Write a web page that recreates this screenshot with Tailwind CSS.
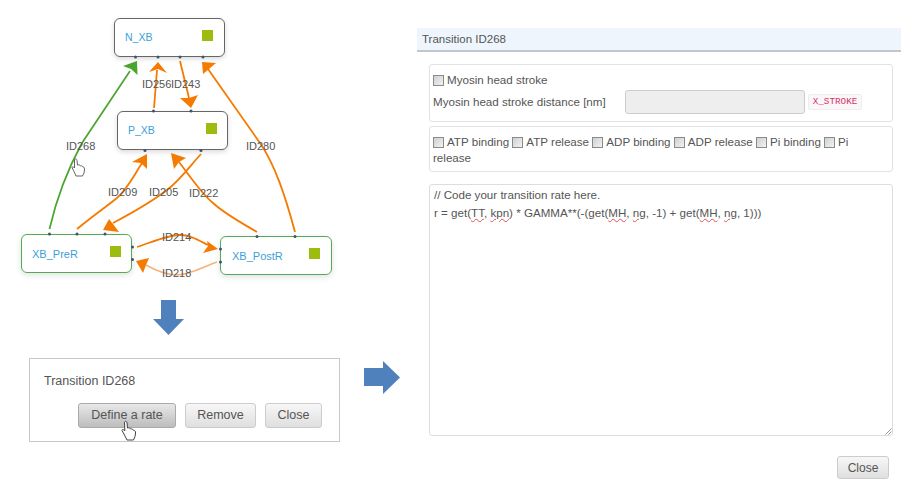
<!DOCTYPE html>
<html lang="en">
<head>
  <meta charset="UTF-8" />
  <title>Transition ID268</title>
  <script src="https://cdn.jsdelivr.net/npm/@tailwindcss/browser@4"></script>
</head>
<body class="bg-white font-['Liberation_Sans',sans-serif] text-[11.6px] text-[#555] overflow-hidden">
  <div class="flex w-[908px] h-[488px]">

    <!-- left column: diagram, arrow, popup -->
    <div class="w-[417px] shrink-0">
      <div class="relative h-[300px]">
        <!-- nodes -->
        <div class="absolute left-[114px] top-[18px] w-[111px] h-[39px] flex items-center justify-between pl-[10px] pr-[11px] bg-white border-[1.5px] border-[#666] rounded-[6px] shadow-[0_2px_5px_rgba(0,0,0,0.15)]">
          <span class="text-[#3a9fd8] text-[10.5px] mt-[1px]">N_XB</span>
          <span class="w-[11px] h-[11px] bg-[#9cbd10] mb-[5px]"></span>
        </div>
        <div class="absolute left-[117px] top-[111px] w-[111px] h-[39px] flex items-center justify-between pl-[10px] pr-[10px] bg-white border-[1.5px] border-[#666] rounded-[6px] shadow-[0_2px_5px_rgba(0,0,0,0.15)]">
          <span class="text-[#3a9fd8] text-[10.5px] mt-[1px]">P_XB</span>
          <span class="w-[11px] h-[11px] bg-[#9cbd10] mb-[5px]"></span>
        </div>
        <div class="absolute left-[21px] top-[234px] w-[111px] h-[39px] flex items-center justify-between pl-[10px] pr-[10px] bg-white border-[1.5px] border-[#55aa55] rounded-[6px] shadow-[0_2px_6px_rgba(0,0,0,0.12)]">
          <span class="text-[#3a9fd8] text-[11px] mt-[1px]">XB_PreR</span>
          <span class="w-[11px] h-[11px] bg-[#9cbd10] mb-[5px]"></span>
        </div>
        <div class="absolute left-[220px] top-[236px] w-[112px] h-[39px] flex items-center justify-between pl-[11px] pr-[11px] bg-white border-[1.5px] border-[#55aa55] rounded-[6px] shadow-[0_2px_6px_rgba(0,0,0,0.12)]">
          <span class="text-[#3a9fd8] text-[11px] mt-[1px]">XB_PostR</span>
          <span class="w-[11px] h-[11px] bg-[#9cbd10] mb-[5px]"></span>
        </div>

        <!-- edges -->
        <svg class="absolute left-0 top-0" width="417" height="300" fill="none">
          <g stroke="#4aa52e" stroke-width="1.7">
            <path d="M49.5 229C58 192 70 165 82 143L130 71" />
          </g>
          <polygon points="137,61 137.5,75 131,69 123,66" fill="#4aa52e" />
          <g stroke="#f57a00" stroke-width="1.8">
            <path d="M154 108L157 70" />
            <path d="M180 61L189 98" />
            <path d="M295 232C285 195 275 165 260 143L208 69" />
            <path d="M77 229C95 214 106 207 117 198C128 188 133 177 142 163" />
            <path d="M201 154C190 166 180 180 167 190C150 203 130 214 113 223" />
            <path d="M257 232C240 222 225 214 213 203C202 194 195 183 179 162" />
            <path d="M137 247C155 241 168 235 180 235C190 235 198 240 208 245" />
          </g>
          <path d="M217 262C205 266 190 275 177 275C165 275 155 270 146 265" stroke="#f7b27a" stroke-width="1.7" />
          <g fill="#f57a00">
            <polygon points="158,62 167,73 158,69 149,72" />
            <polygon points="191,108 180,98 189,98 198,95" />
            <polygon points="202,62 216,63 209,69 203,74" />
            <polygon points="147,154 147,169 141,163 132,162" />
            <polygon points="103,230 109,219 113,224 119,232" />
            <polygon points="171,153 186,158 179,162 174,169" />
            <polygon points="218,249 207,241 208,246 203,253" />
            <polygon points="136,261 149,258 146,265 143,273" />
          </g>
          <!-- ports -->
          <g fill="#3f5468">
            <circle cx="135.5" cy="57" r="1.5" /><circle cx="158" cy="57" r="1.5" /><circle cx="180" cy="57" r="1.5" /><circle cx="203" cy="57" r="1.5" />
            <circle cx="153.5" cy="111" r="1.5" /><circle cx="191" cy="111" r="1.5" /><circle cx="145" cy="150.5" r="1.5" /><circle cx="201" cy="150.5" r="1.5" />
            <circle cx="49.5" cy="234" r="1.5" /><circle cx="77" cy="234" r="1.5" /><circle cx="105" cy="234" r="1.5" /><circle cx="132.5" cy="247" r="1.5" /><circle cx="132.5" cy="259.5" r="1.5" />
            <circle cx="257" cy="236.5" r="1.5" /><circle cx="295" cy="236.5" r="1.5" /><circle cx="220.5" cy="249" r="1.5" /><circle cx="220.5" cy="262" r="1.5" />
          </g>
          <!-- hand cursor -->
          <path d="M74.5 159.5C75.5 158.5 77 159 77 160.5L77.5 165C79 164.5 80 165 80.5 166C81.5 165.5 82.5 166 83 167C84.5 167 84.5 168.5 84.5 170L84 173L82.5 176L76 176L74 171.5L72 167.5C72 166.5 73.5 166.5 74.5 168Z" fill="#fff" stroke="#555" stroke-width="0.9" />
        </svg>

        <!-- edge labels -->
        <span class="absolute left-[66px] top-[140px] text-[11px] leading-[13px]">ID268</span>
        <span class="absolute left-[142px] top-[78px] text-[11px] leading-[13px]">ID256</span>
        <span class="absolute left-[171px] top-[78px] text-[11px] leading-[13px]">ID243</span>
        <span class="absolute left-[246px] top-[140px] text-[11px] leading-[13px]">ID280</span>
        <span class="absolute left-[108px] top-[186px] text-[11px] leading-[13px]">ID209</span>
        <span class="absolute left-[149px] top-[186px] text-[11px] leading-[13px]">ID205</span>
        <span class="absolute left-[189px] top-[187px] text-[11px] leading-[13px]">ID222</span>
        <span class="absolute left-[162px] top-[231px] text-[11px] leading-[13px]">ID214</span>
        <span class="absolute left-[162px] top-[267px] text-[11px] leading-[13px]">ID218</span>
      </div>

      <svg class="ml-[153px]" width="32" height="36" viewBox="0 0 32 36"><polygon points="8,0 23,0 23,19 31,19 15.5,35 0,19 8,19" fill="#4f81bd" /></svg>

      <div class="relative">
        <div class="ml-[29px] mt-[22px] w-[311px] h-[84px] border-[1.5px] border-[#c8c8c8] bg-white pt-[15px] pl-[14px]">
          <p class="text-[12.5px] leading-[14px]">Transition ID268</p>
          <div class="flex gap-[9px] mt-[15px] ml-[34px]">
            <button class="w-[98px] h-[25px] text-[12.5px] text-[#555] rounded-[3px] border border-[#aaa] bg-gradient-to-b from-[#e8e8e8] to-[#bdbdbd]">Define a rate</button>
            <button class="w-[71px] h-[25px] text-[12.5px] text-[#555] rounded-[3px] border border-[#ccc] bg-gradient-to-b from-[#f7f7f7] to-[#dfdfdf]">Remove</button>
            <button class="w-[57px] h-[25px] text-[12.5px] text-[#555] rounded-[3px] border border-[#ccc] bg-gradient-to-b from-[#f7f7f7] to-[#dfdfdf]">Close</button>
          </div>
        </div>
        <svg class="absolute left-[120px] top-[62px]" width="18" height="22" viewBox="0 0 18 22" fill="none"><path d="M4.5 2C5.5 0.8 7 1.2 7 2.7L7.5 8C9 7.5 10.2 8 10.6 9C11.8 8.6 12.8 9.2 13.2 10.2C15 10 15.6 11.5 15.6 13L15 16.5L13.5 20L7 20L4.5 15L2 10.5C2 9 3.6 9 4.8 11Z" fill="#fff" stroke="#444" stroke-width="1" /></svg>
      </div>
    </div>

    <!-- right column: rate dialog -->
    <div class="relative w-[484px] pt-[28px]">
      <svg class="absolute left-[-53px] top-[361px]" width="37" height="33" viewBox="0 0 37 33"><polygon points="0,7 19,7 19,0 36,16.5 19,33 19,25 0,25" fill="#4f81bd" /></svg>

      <div class="h-[24px] pl-[5px] bg-[#eef5fd] border-b-[2px] border-[#c3c7cb] text-[11.5px] leading-[22px]">Transition ID268</div>

      <div class="ml-[12px] mr-[8px] mt-[12px]">
        <div class="h-[58px] border border-[#e2e2e2] rounded-[3px] pl-[3px] pt-[7px]">
          <label class="flex items-center gap-[3px] h-[16px]">
            <input type="checkbox" class="appearance-none w-[11px] h-[11px] border border-[#8a8a8a] bg-gradient-to-br from-[#d0d0d0] to-[#f2f2f2]" />
            <span>Myosin head stroke</span>
          </label>
          <div class="flex items-center mt-[2px]">
            <span class="w-[192px]">Myosin head stroke distance [nm]</span>
            <div class="w-[180px] h-[24px] bg-[#eee] border border-[#ccc] rounded-[3px]"></div>
            <code class="ml-[3px] w-[54px] h-[16px] flex items-center justify-center bg-[#fbf6f7] border border-[#eee] rounded-[2px] font-['Liberation_Mono',monospace] text-[9.3px] text-[#d6336c]">X_STROKE</code>
          </div>
        </div>

        <div class="mt-[4px] h-[46px] border border-[#e2e2e2] rounded-[3px] pl-[3px] pr-[8px] pt-[7px] leading-[16px]">
          <label><input type="checkbox" class="appearance-none align-[-2px] mr-[3px] w-[11px] h-[11px] border border-[#8a8a8a] bg-gradient-to-br from-[#d0d0d0] to-[#f2f2f2]" />ATP binding</label>
          <label><input type="checkbox" class="appearance-none align-[-2px] mr-[3px] w-[11px] h-[11px] border border-[#8a8a8a] bg-gradient-to-br from-[#d0d0d0] to-[#f2f2f2]" />ATP release</label>
          <label><input type="checkbox" class="appearance-none align-[-2px] mr-[3px] w-[11px] h-[11px] border border-[#8a8a8a] bg-gradient-to-br from-[#d0d0d0] to-[#f2f2f2]" />ADP binding</label>
          <label><input type="checkbox" class="appearance-none align-[-2px] mr-[3px] w-[11px] h-[11px] border border-[#8a8a8a] bg-gradient-to-br from-[#d0d0d0] to-[#f2f2f2]" />ADP release</label>
          <label><input type="checkbox" class="appearance-none align-[-2px] mr-[3px] w-[11px] h-[11px] border border-[#8a8a8a] bg-gradient-to-br from-[#d0d0d0] to-[#f2f2f2]" />Pi binding</label>
          <label><input type="checkbox" class="appearance-none align-[-2px] mr-[3px] w-[11px] h-[11px] border border-[#8a8a8a] bg-gradient-to-br from-[#d0d0d0] to-[#f2f2f2]" />Pi</label>
          <span>release</span>
        </div>

        <div class="relative mt-[12px] h-[252px] border-[1.5px] border-[#ddd] rounded-[3px] pl-[4px] pt-[1px] leading-[17.5px]">
          <p>// Code your transition rate here.</p>
          <p>r = get(<span class="underline decoration-wavy decoration-[#e05050] decoration-1">TT</span>, <span class="underline decoration-wavy decoration-[#e05050] decoration-1">kpn</span>) * GAMMA**(-(get(<span class="underline decoration-wavy decoration-[#e05050] decoration-1">MH</span>, <span class="underline decoration-wavy decoration-[#e05050] decoration-1">ng</span>, -1) + get(<span class="underline decoration-wavy decoration-[#e05050] decoration-1">MH</span>, <span class="underline decoration-wavy decoration-[#e05050] decoration-1">ng</span>, 1)))</p>
          <svg class="absolute right-0 bottom-0" width="7" height="7" stroke="#999" stroke-width="1"><path d="M0.5 6.5L6.5 0.5M3.5 6.5L6.5 3.5" /></svg>
        </div>
      </div>

      <div class="flex justify-end mt-[20px] mr-[12px]">
        <button class="w-[52px] h-[23px] text-[12px] text-[#555] rounded-[3px] border border-[#ccc] bg-gradient-to-b from-[#f7f7f7] to-[#dfdfdf]">Close</button>
      </div>
    </div>
  </div>
</body>
</html>
